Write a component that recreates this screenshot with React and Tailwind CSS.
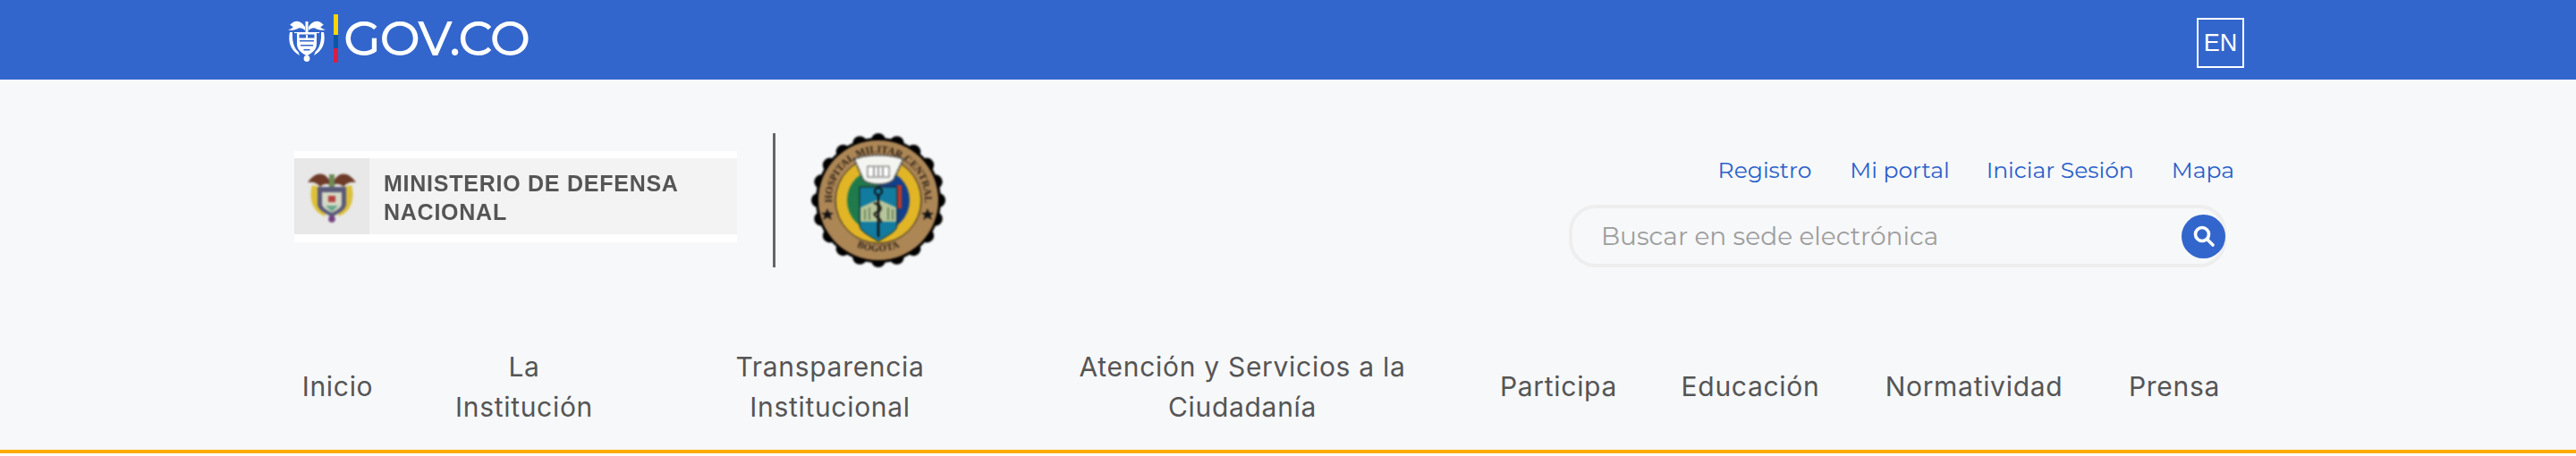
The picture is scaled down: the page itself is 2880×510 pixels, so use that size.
import React from 'react';

const montserrat = 'font-["Montserrat","Inter","Noto_Sans",sans-serif]';

const navItems = [
  { label: 'Inicio', width: 'w-[151px]' },
  { label: 'La Institución', width: 'w-[266px]', lines: ['La', 'Institución'] },
  { label: 'Transparencia Institucional', width: 'w-[418px]', lines: ['Transparencia', 'Institucional'] },
  { label: 'Atención y Servicios a la Ciudadanía', width: 'w-[504px]', lines: ['Atención y Servicios a la', 'Ciudadanía'] },
  { label: 'Participa', width: 'w-[203px]' },
  { label: 'Educación', width: 'w-[226px]' },
  { label: 'Normatividad', width: 'w-[274px]' },
  { label: 'Prensa', width: 'w-[174px]' },
];

const topLinks = [
  { label: 'Registro', cls: 'mr-[43px]' },
  { label: 'Mi portal', cls: 'mr-[41px]' },
  { label: 'Iniciar Sesión', cls: 'mr-[42px]' },
  { label: 'Mapa', cls: '' },
];

// white version of the national shield, top bar
const WhiteShield = () => (
  <svg width="42" height="48" viewBox="0 0 42 48" className="shrink-0">
    <path d="M19 9 C15 2 8 0 2 7 C4 7 4 9 6 9 C4 11 3 12 0 12 C5 14 9 12 12 10.5 C14 10 17 11 19 13 Z" fill="#fff" />
    <path d="M23 9 C27 2 34 0 40 7 C38 7 38 9 36 9 C38 11 39 12 42 12 C37 14 33 12 30 10.5 C28 10 25 11 23 13 Z" fill="#fff" />
    <path d="M19.5 3 H22.5 V15 H19.5 Z" fill="#fff" />
    <path d="M2 15 C0 25 2 35 13 41 L11.5 37 C6 32 4.5 24 5 15 Z" fill="#fff" />
    <path d="M40 15 C42 25 40 35 29 41 L30.5 37 C36 32 37.5 24 37 15 Z" fill="#fff" />
    <path d="M7 15 H35 V16 H32 V28 C32 35 27 38 21 41.5 C15 38 10 35 10 28 V16 H7 Z" fill="#fff" />
    <path d="M12.5 17.5 H29.5 V21.5 H12.5 Z" fill="#3366cc" />
    <path d="M13 24 H29 V25.5 H13 Z M14 29 H28 V30.5 H14 Z M17.5 34 H24.5 V35.5 H17.5 Z" fill="#3366cc" />
    <path d="M20 18 H22 V22 H20 Z" fill="#fff" />
    <circle cx="21" cy="44.5" r="3.4" fill="#fff" />
  </svg>
);

// colour version, blurred like the scaled logo
const ColorShield = () => (
  <svg width="54" height="60" viewBox="0 0 54 60" className="blur-[0.9px]">
    <path d="M25 13 C20 2 9 1 0 14 C7 13 11 15 14 19 C18 15 22 15 25 17 Z" fill="#6d3b28" />
    <path d="M29 13 C34 2 45 1 54 14 C47 13 43 15 40 19 C36 15 32 15 29 17 Z" fill="#6d3b28" />
    <path d="M24 5 H30 V20 H24 Z" fill="#6f8a55" />
    <path d="M5 17 C1 32 5 47 20 52 L19 45 C13 39 12 28 13 19 Z" fill="#dcc03a" />
    <path d="M49 17 C53 32 49 47 34 52 L35 45 C41 39 42 28 41 19 Z" fill="#dcc03a" />
    <path d="M11 19 H43 V38 C43 45 35 48 27 53 C19 48 11 45 11 38 Z" fill="#5a5a78" />
    <path d="M16 25 H38 V38 C38 43 32 45 27 48 C22 45 16 43 16 38 Z" fill="#d5d8c4" />
    <path d="M23 29 H31 V36 H23 Z" fill="#b5433f" />
    <path d="M20 40 H34 L27 47 Z" fill="#6aa58d" />
    <circle cx="27" cy="55" r="3.8" fill="#74407f" />
  </svg>
);

const Seal = () => {
  const teeth = Array.from({ length: 20 }, (_, i) => {
    const a = (i / 20) * Math.PI * 2;
    return { x: 75 + Math.cos(a) * 67, y: 75 + Math.sin(a) * 67 };
  });
  return (
    <svg width="150" height="150" viewBox="0 0 150 150" className="blur-[1px]">
      <circle cx="75" cy="75" r="70" fill="#000" />
      {teeth.map((t, i) => (
        <circle key={i} cx={t.x} cy={t.y} r="8" fill="#000" />
      ))}
      <circle cx="75" cy="75" r="67" fill="#ad8656" />
      <circle cx="75" cy="75" r="48" fill="#e2b527" stroke="#1a1a1a" strokeWidth="1" />
      <defs>
        <path id="sealTop" d="M 24 84 A 52 52 0 1 1 126 84" />
        <path id="sealBottom" d="M 31 112 A 58 58 0 0 0 119 112" />
        <clipPath id="sealInner">
          <circle cx="75" cy="75" r="35" />
        </clipPath>
      </defs>
      <text fontFamily="'Liberation Serif', serif" fontWeight="700" fontSize="11.5" fill="#2a2116">
        <textPath href="#sealTop" startOffset="50%" textAnchor="middle">HOSPITAL MILITAR CENTRAL</textPath>
      </text>
      <text fontFamily="'Liberation Serif', serif" fontWeight="700" fontSize="11" fill="#2a2116" letterSpacing="0.4">
        <textPath href="#sealBottom" startOffset="50%" textAnchor="middle">BOGOTA</textPath>
      </text>
      <path d="M18 84 L20 89 L25 89 L21 92 L23 97 L18 94 L13 97 L15 92 L11 89 L16 89 Z" fill="#111" />
      <path d="M130 84 L132 89 L137 89 L133 92 L135 97 L130 94 L125 97 L127 92 L123 89 L128 89 Z" fill="#111" />
      <g clipPath="url(#sealInner)">
        <rect x="40" y="40" width="35" height="70" fill="#1f7a4c" />
        <rect x="75" y="40" width="35" height="70" fill="#123f8c" />
        <rect x="96" y="58" width="5" height="26" fill="#c0392b" />
      </g>
      <path d="M48 29 C60 23 90 23 103 29 L92 52 C85 59 65 59 58 52 Z" fill="#f4f4f0" stroke="#444" strokeWidth="2" strokeDasharray="3 1" />
      <rect x="63" y="37" width="24" height="12" fill="#fff" stroke="#555" strokeWidth="1" />
      <path d="M70 38 V48 M75 38 V48 M80 38 V48" stroke="#555" strokeWidth="1.2" />
      <path d="M54 60 H96 V103 C96 110 84 115 75 121 C66 115 54 110 54 103 Z" fill="#127ba0" stroke="#1a1a1a" strokeWidth="1" />
      <path d="M55 83 L75 74 L95 83 V99 H55 Z" fill="#b7c69a" />
      <path d="M60 85 V97 M65 83 V97 M86 83 V97 M91 85 V97" stroke="#55704a" strokeWidth="1.5" />
      <path d="M75 70 V116" stroke="#111" strokeWidth="2.5" />
      <circle cx="75" cy="65" r="4" fill="none" stroke="#111" strokeWidth="2" />
      <path d="M70 78 C80 81 80 86 72 89 C66 92 80 95 78 100" fill="none" stroke="#111" strokeWidth="2" />
    </svg>
  );
};

const App = () => (
  <div className="w-[2880px] h-[510px] bg-white overflow-hidden">
    <div className="h-[507px] bg-[#f7f8fa] border-b-4 border-[#ffab00] flex flex-col">
      <div className="h-[89px] bg-[#3366cc] flex items-center pl-[322px] pr-[371px] shrink-0">
        <WhiteShield />
        <div className="w-[5px] h-[54px] ml-[9px] mt-[-4px] flex flex-col shrink-0">
          <div className="h-[23px] bg-[#ffd500]"></div>
          <div className="h-[15px] bg-[#0b57a4]"></div>
          <div className="h-[16px] bg-[#d81e45]"></div>
        </div>
        <span className={`ml-[6px] text-white text-[54px] leading-none font-medium tracking-[-1.3px] mt-[-4px] ${montserrat}`}>
          GOV.CO
        </span>
        <div className="ml-auto w-[53px] h-[56px] mt-[7px] border-2 border-white flex items-center justify-center text-white text-[27px] font-['Liberation_Sans',sans-serif]">
          EN
        </div>
      </div>

      <div className="h-[277px] flex justify-between pl-[329px] pr-[382px] shrink-0">
        <div className="flex items-center h-[150px] mt-[60px]">
          <div className="w-[495px] h-[102px] bg-white py-[8px] mt-[-8px]">
            <div className="h-[85px] bg-[#f3f3f3] flex">
              <div className="w-[84px] bg-[#e8e8e8] flex items-center justify-center">
                <ColorShield />
              </div>
              <div className="ml-[16px] mt-[12px] text-[#555555] text-[25px] leading-[32px] font-bold tracking-[0.75px] blur-[0.4px] font-['Liberation_Sans',sans-serif]">
                MINISTERIO DE DEFENSA<br />NACIONAL
              </div>
            </div>
          </div>
          <div className="w-[3px] h-[150px] bg-[#666666] ml-[40px]"></div>
          <div className="ml-[40px]">
            <Seal />
          </div>
        </div>

        <div className="flex flex-col items-end pt-[83px]">
          <div className={`flex text-[#2a5fca] text-[25px] leading-[36px] ${montserrat}`}>
            {topLinks.map((link) => (
              <a key={link.label} className={link.cls}>{link.label}</a>
            ))}
          </div>
          <div className="w-[735px] h-[70px] mt-[21px] mr-[9px] border-[4px] border-[#eeeeee] rounded-[30px] flex items-center pl-[32px]">
            <span className={`text-[#9e9e9e] text-[28px] ${montserrat}`}>Buscar en sede electrónica</span>
            <div className="ml-auto w-[49px] h-[49px] rounded-full bg-[#3366cc] flex items-center justify-center mr-[-3px]">
              <svg width="28" height="28" viewBox="0 0 28 28" fill="none" stroke="#fff" strokeWidth="3.6" strokeLinecap="round">
                <circle cx="12" cy="12" r="7.5" />
                <path d="M18 18 L24 24" />
              </svg>
            </div>
          </div>
        </div>
      </div>

      <div className="flex items-center h-[124px] pt-[9px] pl-[302px] shrink-0">
        {navItems.map((item) => (
          <a key={item.label} className={`${item.width} shrink-0 text-center text-[#555555] text-[30px] leading-[45px] tracking-[0.7px] font-['Inter',sans-serif]`}>
            {item.lines ? item.lines.map((l) => <div key={l}>{l}</div>) : item.label}
          </a>
        ))}
      </div>
    </div>
  </div>
);

export default App;
